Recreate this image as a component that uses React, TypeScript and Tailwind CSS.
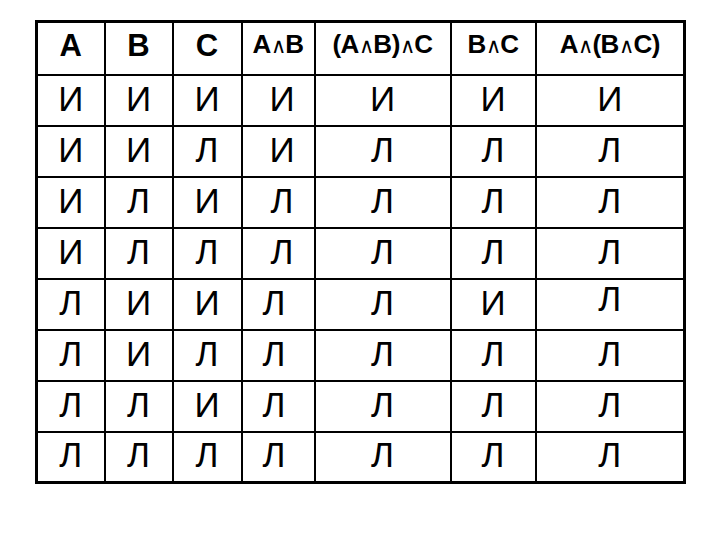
const rows = [
  ['И', 'И', 'И', 'И', 'И', 'И', 'И'],
  ['И', 'И', 'Л', 'И', 'Л', 'Л', 'Л'],
  ['И', 'Л', 'И', 'Л', 'Л', 'Л', 'Л'],
  ['И', 'Л', 'Л', 'Л', 'Л', 'Л', 'Л'],
  ['Л', 'И', 'И', 'Л', 'Л', 'И', 'Л'],
  ['Л', 'И', 'Л', 'Л', 'Л', 'Л', 'Л'],
  ['Л', 'Л', 'И', 'Л', 'Л', 'Л', 'Л'],
  ['Л', 'Л', 'Л', 'Л', 'Л', 'Л', 'Л'],
]

const widths = ['w-[68px]', 'w-[68px]', 'w-[69px]', 'w-[73px]', 'w-[136px]', 'w-[85px]', 'w-[149px]']

function And() {
  return <span className="text-[21px] font-normal align-baseline">∧</span>
}

// small nudges seen in the original slide
function cellPad(row: number, col: number) {
  if (col === 3) return row < 4 ? 'pl-[8px] pb-1' : 'pr-[8px] pb-1'
  if (col === 6 && row === 4) return 'pb-[12px]'
  return 'pb-1'
}

export default function App() {
  return (
    <div className="w-[720px] h-[540px] bg-white pt-[20px] pl-[35px] font-['Liberation_Sans',Arial,sans-serif] text-black">
      <table className="table-fixed border-collapse border-[3px] border-black">
        <colgroup>
          {widths.map((w, i) => (
            <col key={i} className={w} />
          ))}
        </colgroup>
        <thead>
          <tr className="h-[51px]">
            <th className="border-2 border-black text-[31px] font-bold pb-1">A</th>
            <th className="border-2 border-black text-[31px] font-bold pb-1">B</th>
            <th className="border-2 border-black text-[31px] font-bold pb-1">C</th>
            <th className="border-2 border-black text-[26px] font-bold pb-2 whitespace-nowrap tracking-[-0.5px]">
              A<And />B
            </th>
            <th className="border-2 border-black text-[26px] font-bold pb-2 whitespace-nowrap tracking-[-0.5px]">
              (A<And />B)<And />C
            </th>
            <th className="border-2 border-black text-[26px] font-bold pb-2 whitespace-nowrap tracking-[-0.5px]">
              B<And />C
            </th>
            <th className="border-2 border-black text-[26px] font-bold pb-2 whitespace-nowrap tracking-[-0.5px]">
              A<And />(B<And />C)
            </th>
          </tr>
        </thead>
        <tbody>
          {rows.map((r, i) => (
            <tr key={i} className="h-[51px]">
              {r.map((v, j) => (
                <td
                  key={j}
                  className={`border-2 border-black text-center text-[35px] leading-none ${cellPad(i, j)}`}
                >
                  {v}
                </td>
              ))}
            </tr>
          ))}
        </tbody>
      </table>
    </div>
  )
}
